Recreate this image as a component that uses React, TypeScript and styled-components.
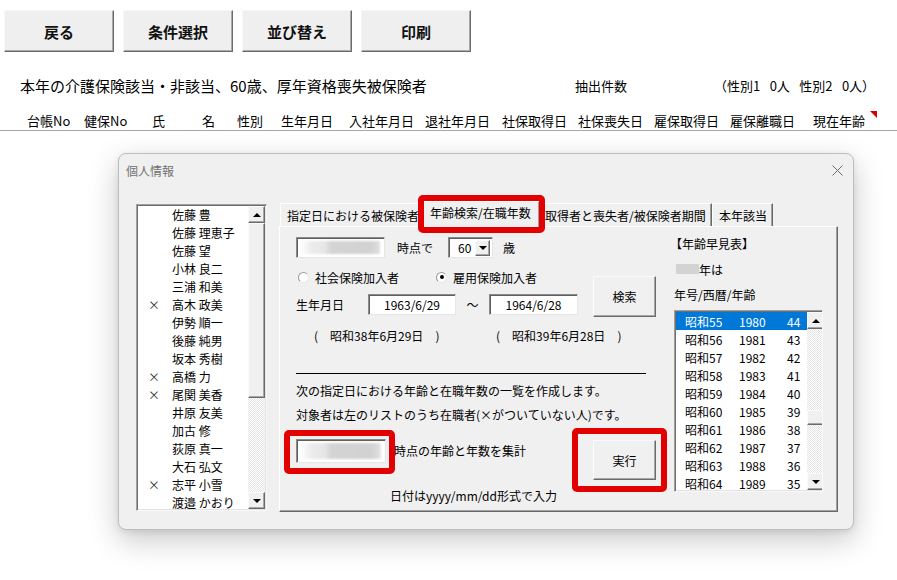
import React from "react";
import styled, { createGlobalStyle } from "styled-components";

const GlobalStyle = createGlobalStyle`
  html, body { margin: 0; padding: 0; background: #fff; }
  body { font-family: "Noto Sans CJK JP", "Noto Sans", sans-serif; color: #000; }
  * { box-sizing: border-box; }
`;

const Page = styled.div`
  width: 897px;
  height: 580px;
  overflow: hidden;
  background: #fff;
  font-family: "Noto Sans CJK JP", "Noto Sans", sans-serif;
`;

const Toolbar = styled.div`
  display: flex;
  gap: 9px;
  padding: 10px 0 0 4px;
`;

const ToolButton = styled.button`
  width: 110px;
  height: 42px;
  padding: 0;
  background: #efefef;
  border: 1px solid;
  border-color: #f7f7f7 #6b6b6b #6b6b6b #f7f7f7;
  box-shadow: inset -1px -1px 0 #a9a9a9;
  font-family: inherit;
  font-weight: 700;
  font-size: 15px;
  color: #111;
`;

const SummaryRow = styled.div`
  display: flex;
  align-items: center;
  height: 20px;
  margin-top: 23px;
  font-size: 13px;
  white-space: pre;
`;

const SummaryTitle = styled.div`
  width: 575px;
  padding-left: 20px;
  font-size: 15px;
`;

const SummaryCount = styled.div`
  width: 139px;
`;

const HeaderRow = styled.div`
  position: relative;
  display: grid;
  grid-template-columns: 57px 68px 50px 35px 44px 68px 76px 77px 76px 76px 76px 83px 1fr;
  height: 20px;
  margin-top: 16px;
  padding-left: 27px;
  align-items: center;
  font-size: 13px;
  border-bottom: 1px solid #a6a6a6;
`;

const CommentMark = styled.span`
  position: absolute;
  top: 0;
  right: 20px;
  width: 0;
  height: 0;
  border-top: 7px solid #d40000;
  border-left: 7px solid transparent;
`;

const Dialog = styled.div`
  margin: 22px 0 0 118px;
  width: 736px;
  height: 377px;
  background: #f0f0f0;
  border: 1px solid #bdbdbd;
  border-radius: 8px;
  box-shadow: 0 10px 30px rgba(0, 0, 0, 0.22), 0 2px 6px rgba(0, 0, 0, 0.08);
`;

const TitleBar = styled.div`
  height: 32px;
  display: flex;
  align-items: center;
  justify-content: space-between;
  padding: 0 10px 0 7px;
  font-size: 12px;
  color: #707070;
`;

const DialogBody = styled.div`
  display: flex;
  align-items: flex-start;
  padding: 15px 0 0 17px;
  font-size: 12px;
`;

const ListBox = styled.div<{ $w: number; $h: number; $mt?: number }>`
  display: flex;
  width: ${(p) => p.$w}px;
  height: ${(p) => p.$h}px;
  margin-top: ${(p) => p.$mt ?? 0}px;
  background: #fff;
  border: 1px solid;
  border-color: #a0a0a0 #f8f8f8 #f8f8f8 #a0a0a0;
  box-shadow: inset 1px 1px 0 #6f6f6f, inset -1px -1px 0 #e3e3e3;
  padding: 1px;
  overflow: hidden;
`;

const Items = styled.div<{ $pl: number }>`
  flex: 1;
  padding-left: ${(p) => p.$pl}px;
`;

const NameItem = styled.div`
  display: flex;
  height: 18px;
  align-items: center;
  line-height: 18px;
`;

const Mark = styled.span`
  width: 24px;
  color: #333;
  font-size: 12px;
`;

const ScrollBar = styled.div`
  width: 17px;
  display: flex;
  flex-direction: column;
  background-color: #fff;
  background-image: repeating-conic-gradient(#e4e4e4 0 25%, #fff 0 50%);
  background-size: 2px 2px;
`;

const ArrowButton = styled.div<{ $down?: boolean }>`
  width: 17px;
  height: 17px;
  flex: none;
  display: flex;
  align-items: center;
  justify-content: center;
  background: #f0f0f0;
  border: 1px solid;
  border-color: #fbfbfb #6b6b6b #6b6b6b #fbfbfb;
  box-shadow: inset -1px -1px 0 #a6a6a6;
  &::before {
    content: "";
    width: 0;
    height: 0;
    border-left: 4px solid transparent;
    border-right: 4px solid transparent;
    ${(p) => (p.$down ? "border-top: 4px solid #000;" : "border-bottom: 4px solid #000;")}
  }
`;

const Thumb = styled.div<{ $h: number; $mt: number }>`
  height: ${(p) => p.$h}px;
  margin-top: ${(p) => p.$mt}px;
  flex: none;
  background: #f0f0f0;
  border: 1px solid;
  border-color: #fbfbfb #6b6b6b #6b6b6b #fbfbfb;
  box-shadow: inset -1px -1px 0 #a6a6a6;
`;

const Spacer = styled.div`
  flex: 1;
`;

const TabArea = styled.div`
  width: 559px;
  margin-left: 12px;
  display: flex;
  flex-direction: column;
`;

const TabStrip = styled.div`
  display: flex;
  align-items: flex-end;
  height: 25px;
  padding-left: 1px;
`;

const Tab = styled.div<{ $w: number; $active?: boolean; $pl?: number }>`
  position: relative;
  width: ${(p) => p.$w}px;
  height: ${(p) => (p.$active ? 26 : 23)}px;
  margin-bottom: ${(p) => (p.$active ? -1 : 0)}px;
  padding: ${(p) => (p.$active ? "2px 0 0 7px" : `3px 0 0 ${p.$pl ?? 6}px`)};
  background: #f0f0f0;
  border-top: 1px solid #fff;
  border-left: 1px solid #fff;
  border-right: 1px solid #696969;
  box-shadow: inset -1px 0 0 #a0a0a0;
  white-space: nowrap;
  overflow: hidden;
  line-height: 18px;
  z-index: ${(p) => (p.$active ? 2 : 1)};
`;

const Highlight = styled.div<{ $t: number; $r: number; $b: number; $l: number }>`
  position: relative;
  &::after {
    content: "";
    position: absolute;
    top: ${(p) => p.$t}px;
    right: ${(p) => p.$r}px;
    bottom: ${(p) => p.$b}px;
    left: ${(p) => p.$l}px;
    border: 6px solid #e20000;
    border-radius: 5px;
    pointer-events: none;
    z-index: 5;
  }
`;

const Panel = styled.div`
  height: 286px;
  display: flex;
  padding: 10px 0 0 16px;
  background: #f0f0f0;
  border-top: 1px solid #fff;
  border-left: 1px solid #fff;
  border-right: 1px solid #696969;
  border-bottom: 1px solid #696969;
  box-shadow: inset -1px -1px 0 #a0a0a0;
`;

const LeftCol = styled.div`
  width: 371px;
  display: flex;
  flex-direction: column;
`;

const Row = styled.div<{ $h?: number; $mt?: number; $pl?: number }>`
  display: flex;
  align-items: center;
  height: ${(p) => (p.$h ? `${p.$h}px` : "auto")};
  margin-top: ${(p) => p.$mt ?? 0}px;
  padding-left: ${(p) => p.$pl ?? 0}px;
  white-space: nowrap;
`;

const Label = styled.span<{ $ml?: number; $w?: number }>`
  margin-left: ${(p) => p.$ml ?? 0}px;
  ${(p) => (p.$w ? `width: ${p.$w}px; text-align: center;` : "")}
  line-height: 18px;
`;

const Field = styled.div<{ $w: number; $h: number; $ml?: number }>`
  width: ${(p) => p.$w}px;
  height: ${(p) => p.$h}px;
  margin-left: ${(p) => p.$ml ?? 0}px;
  flex: none;
  display: flex;
  align-items: center;
  justify-content: center;
  background: #fff;
  border: 1px solid;
  border-color: #8a8a8a #e6e6e6 #e6e6e6 #8a8a8a;
  box-shadow: inset 1px 1px 0 #5f5f5f;
  padding: 3px 4px;
`;

const Blur = styled.span`
  display: block;
  width: 100%;
  height: 100%;
  background: linear-gradient(
    90deg,
    #fff 0,
    #ececec 10px,
    #e6e6e6 24px,
    #d4d4d4 30px,
    #d2d2d2 70px,
    #dedede 78px,
    #f5f5f5 82px
  );
  filter: blur(1px);
`;

const Combo = styled.div`
  width: 45px;
  height: 21px;
  margin-left: 15px;
  display: flex;
  align-items: center;
  justify-content: space-between;
  padding: 1px 2px 1px 9px;
  background: #fff;
  border: 1px solid;
  border-color: #8a8a8a #e6e6e6 #e6e6e6 #8a8a8a;
  box-shadow: inset 1px 1px 0 #5f5f5f;
`;

const ComboButton = styled(ArrowButton)`
  width: 15px;
  height: 16px;
`;

const RadioItem = styled.label<{ $ml?: number }>`
  display: flex;
  align-items: center;
  gap: 6px;
  margin-left: ${(p) => p.$ml ?? 0}px;
`;

const RadioCircle = styled.span<{ $on?: boolean }>`
  width: 11px;
  height: 11px;
  border-radius: 50%;
  background: #fff;
  border: 1px solid #9a9a9a;
  border-right-color: #e8e8e8;
  border-bottom-color: #e8e8e8;
  display: flex;
  align-items: center;
  justify-content: center;
  &::after {
    content: "";
    width: 4px;
    height: 4px;
    border-radius: 50%;
    background: ${(p) => (p.$on ? "#000" : "transparent")};
  }
`;

const PushButton = styled.button<{ $h: number; $ml?: number; $mt?: number; $mr?: number }>`
  width: 63px;
  height: ${(p) => p.$h}px;
  margin-left: ${(p) => p.$ml ?? 0}px;
  margin-top: ${(p) => p.$mt ?? 0}px;
  margin-right: ${(p) => p.$mr ?? 0}px;
  padding: 0;
  flex: none;
  background: #f0f0f0;
  border: 1px solid;
  border-color: #fbfbfb #6b6b6b #6b6b6b #fbfbfb;
  box-shadow: inset -1px -1px 0 #a6a6a6;
  font-family: inherit;
  font-size: 12px;
  color: #000;
`;

const SearchGroup = styled.div`
  display: flex;
  align-items: flex-start;
  margin-top: 11px;
`;

const Stack = styled.div`
  display: flex;
  flex-direction: column;
`;

const EraGroup = styled.div<{ $w: number }>`
  width: ${(p) => p.$w}px;
  display: flex;
  gap: 12px;
`;

const Divider = styled.div`
  width: 350px;
  height: 1px;
  margin-top: 29px;
  background: #000;
`;

const Note = styled.div<{ $mt?: number; $pl?: number }>`
  line-height: 24px;
  margin-top: ${(p) => p.$mt ?? 0}px;
  padding-left: ${(p) => p.$pl ?? 0}px;
  white-space: nowrap;
`;

const ExecRow = styled.div`
  display: flex;
  align-items: flex-start;
  height: 41px;
  margin-top: 12px;
`;

const ExecLabel = styled.span`
  margin-left: 8px;
  line-height: 24px;
`;

const Footer = styled.div`
  margin-top: 7px;
  line-height: 18px;
  padding-left: 94px;
`;

const RightCol = styled.div`
  width: 149px;
  margin-left: 7px;
  margin-top: -3px;
  display: flex;
  flex-direction: column;
`;

const Line = styled.div<{ $mt?: number; $ml?: number }>`
  display: flex;
  align-items: center;
  height: 18px;
  margin-top: ${(p) => p.$mt ?? 0}px;
  margin-left: ${(p) => p.$ml ?? 0}px;
  white-space: nowrap;
`;

const GrayBlock = styled.span`
  width: 23px;
  height: 10px;
  background: #d3d3d3;
  margin-left: 2px;
`;

const EraRow = styled.div<{ $sel?: boolean }>`
  display: flex;
  height: 18px;
  align-items: center;
  padding-left: 9px;
  background: ${(p) => (p.$sel ? "#0078d7" : "transparent")};
  color: ${(p) => (p.$sel ? "#fff" : "#000")};
`;

const EraCell = styled.span<{ $w: number }>`
  width: ${(p) => p.$w}px;
`;

const CloseIcon = () => (
  <svg width="11" height="11" viewBox="0 0 11 11">
    <path d="M0.5 0.5 L10.5 10.5 M10.5 0.5 L0.5 10.5" stroke="#6d6d6d" strokeWidth="1" />
  </svg>
);

const headers = [
  "台帳No", "健保No", "氏", "名", "性別", "生年月日", "入社年月日",
  "退社年月日", "社保取得日", "社保喪失日", "雇保取得日", "雇保離職日", "現在年齢",
];

const people: [string, boolean][] = [
  ["佐藤 豊", false],
  ["佐藤 理恵子", false],
  ["佐藤 望", false],
  ["小林 良二", false],
  ["三浦 和美", false],
  ["高木 政美", true],
  ["伊勢 順一", false],
  ["後藤 純男", false],
  ["坂本 秀樹", false],
  ["高橋 力", true],
  ["尾関 美香", true],
  ["井原 友美", false],
  ["加古 修", false],
  ["荻原 真一", false],
  ["大石 弘文", false],
  ["志平 小雪", true],
  ["渡邉 かおり", false],
];

const eras: [string, string, string][] = [
  ["昭和55", "1980", "44"],
  ["昭和56", "1981", "43"],
  ["昭和57", "1982", "42"],
  ["昭和58", "1983", "41"],
  ["昭和59", "1984", "40"],
  ["昭和60", "1985", "39"],
  ["昭和61", "1986", "38"],
  ["昭和62", "1987", "37"],
  ["昭和63", "1988", "36"],
  ["昭和64", "1989", "35"],
];

export default function App() {
  return (
    <Page>
      <GlobalStyle />
      <Toolbar>
        <ToolButton>戻る</ToolButton>
        <ToolButton>条件選択</ToolButton>
        <ToolButton>並び替え</ToolButton>
        <ToolButton>印刷</ToolButton>
      </Toolbar>

      <SummaryRow>
        <SummaryTitle>本年の介護保険該当・非該当、60歳、厚年資格喪失被保険者</SummaryTitle>
        <SummaryCount>抽出件数</SummaryCount>
        <span>{"（性別1\u2002 0人\u2002 性別2\u2002 0人）"}</span>
      </SummaryRow>

      <HeaderRow>
        {headers.map((h) => (
          <span key={h}>{h}</span>
        ))}
        <CommentMark />
      </HeaderRow>

      <Dialog>
        <TitleBar>
          <span>個人情報</span>
          <CloseIcon />
        </TitleBar>
        <DialogBody>
          <ListBox $w={131} $h={307} $mt={3}>
            <Items $pl={10}>
              {people.map(([name, gone]) => (
                <NameItem key={name}>
                  <Mark>{gone ? "×" : ""}</Mark>
                  <span>{name}</span>
                </NameItem>
              ))}
            </Items>
            <ScrollBar>
              <ArrowButton />
              <Thumb $h={175} $mt={0} />
              <Spacer />
              <ArrowButton $down />
            </ScrollBar>
          </ListBox>

          <TabArea>
            <TabStrip>
              <Tab $w={142}>指定日における被保険者</Tab>
              <Highlight $t={-6} $r={-5} $b={-7} $l={-4}>
                <Tab $w={118} $active>
                  年齢検索/在職年数
                </Tab>
              </Highlight>
              <Tab $w={172} $pl={4}>
                取得者と喪失者/被保険者期間
              </Tab>
              <Tab $w={61}>本年該当</Tab>
            </TabStrip>
            <Panel>
              <LeftCol>
                <Row $h={21}>
                  <Field $w={89} $h={21}>
                    <Blur />
                  </Field>
                  <Label $ml={12}>時点で</Label>
                  <Combo>
                    <span>60</span>
                    <ComboButton $down />
                  </Combo>
                  <Label $ml={10}>歳</Label>
                </Row>

                <SearchGroup>
                  <Stack>
                    <Row $h={16} $pl={2}>
                      <RadioItem>
                        <RadioCircle />
                        <span>社会保険加入者</span>
                      </RadioItem>
                      <RadioItem $ml={37}>
                        <RadioCircle $on />
                        <span>雇用保険加入者</span>
                      </RadioItem>
                    </Row>
                    <Row $h={21} $mt={9}>
                      <Label>生年月日</Label>
                      <Field $w={88} $h={21} $ml={24}>
                        1963/6/29
                      </Field>
                      <Label $w={33}>～</Label>
                      <Field $w={89} $h={21}>
                        1964/6/28
                      </Field>
                    </Row>
                  </Stack>
                  <PushButton $h={41} $ml={15} $mt={7}>
                    検索
                  </PushButton>
                </SearchGroup>

                <Row $h={18} $mt={9} $pl={18}>
                  <EraGroup $w={182}>
                    <span>(</span>
                    <span>昭和38年6月29日</span>
                    <span>)</span>
                  </EraGroup>
                  <EraGroup $w={140}>
                    <span>(</span>
                    <span>昭和39年6月28日</span>
                    <span>)</span>
                  </EraGroup>
                </Row>

                <Divider />
                <Note $mt={5}>次の指定日における年齢と在職年数の一覧を作成します。</Note>
                <Note>対象者は左のリストのうち在職者(×がついていない人)です。</Note>

                <ExecRow>
                  <Highlight $t={-9} $r={-9} $b={-11} $l={-12}>
                    <Field $w={90} $h={24}>
                      <Blur />
                    </Field>
                  </Highlight>
                  <ExecLabel>時点の年齢と年数を集計</ExecLabel>
                  <Spacer />
                  <Highlight $t={-11} $r={-11} $b={-12} $l={-21}>
                    <PushButton $h={40} $mt={1} $mr={0}>
                      実行
                    </PushButton>
                  </Highlight>
                  <Label $w={11} />
                </ExecRow>

                <Footer>日付はyyyy/mm/dd形式で入力</Footer>
              </LeftCol>

              <RightCol>
                <Line $ml={-4}>【年齢早見表】</Line>
                <Line $mt={8}>
                  <GrayBlock />
                  <span>年は</span>
                </Line>
                <Line $mt={7}>年号/西暦/年齢</Line>
                <ListBox $w={149} $h={182} $mt={7}>
                  <Items $pl={0}>
                    {eras.map(([e, y, a], i) => (
                      <EraRow key={e} $sel={i === 0}>
                        <EraCell $w={54}>{e}</EraCell>
                        <EraCell $w={48}>{y}</EraCell>
                        <EraCell $w={20}>{a}</EraCell>
                      </EraRow>
                    ))}
                  </Items>
                  <ScrollBar>
                    <ArrowButton />
                    <Thumb $h={15} $mt={81} />
                    <Spacer />
                    <ArrowButton $down />
                  </ScrollBar>
                </ListBox>
              </RightCol>
            </Panel>
          </TabArea>
        </DialogBody>
      </Dialog>
    </Page>
  );
}
